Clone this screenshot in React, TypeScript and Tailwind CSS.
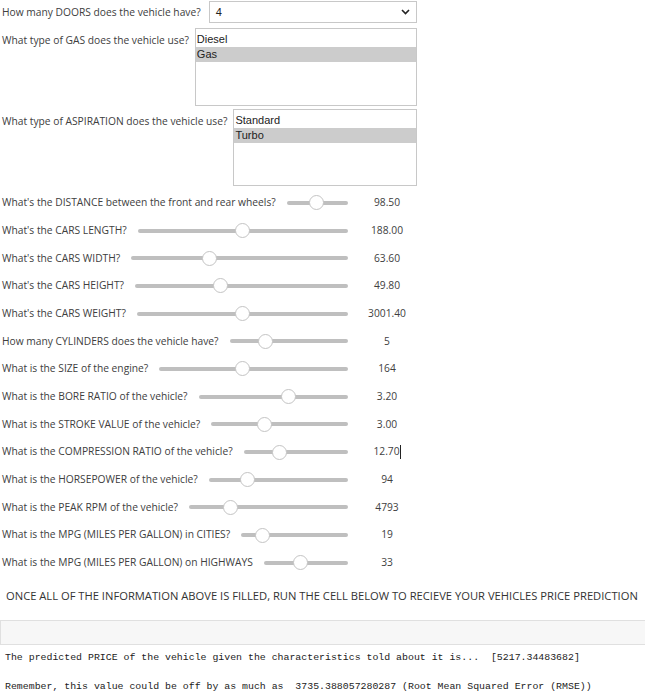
import React from "react";

const sliders: { label: string; value: string; p: number; cursor?: boolean }[] = [
  { label: "What's the DISTANCE between the front and rear wheels?", value: "98.50", p: 0.48 },
  { label: "What's the CARS LENGTH?", value: "188.00", p: 0.5 },
  { label: "What's the CARS WIDTH?", value: "63.60", p: 0.36 },
  { label: "What's the CARS HEIGHT?", value: "49.80", p: 0.4 },
  { label: "What's the CARS WEIGHT?", value: "3001.40", p: 0.5 },
  { label: "How many CYLINDERS does the vehicle have?", value: "5", p: 0.3 },
  { label: "What is the SIZE of the engine?", value: "164", p: 0.44 },
  { label: "What is the BORE RATIO of the vehicle?", value: "3.20", p: 0.6 },
  { label: "What is the STROKE VALUE of the vehicle?", value: "3.00", p: 0.39 },
  { label: "What is the COMPRESSION RATIO of the vehicle?", value: "12.70", p: 0.34, cursor: true },
  { label: "What is the HORSEPOWER of the vehicle?", value: "94", p: 0.28 },
  { label: "What is the PEAK RPM of the vehicle?", value: "4793", p: 0.26 },
  { label: "What is the MPG (MILES PER GALLON) in CITIES?", value: "19", p: 0.2 },
  { label: "What is the MPG (MILES PER GALLON) on HIGHWAYS", value: "33", p: 0.44 },
];

function Slider({ label, value, p, cursor }: { label: string; value: string; p: number; cursor?: boolean }) {
  return (
    <div className="flex items-center h-[27.69px] w-[426px]">
      <span className="pl-[2px] whitespace-nowrap">{label}</span>
      <div className="relative ml-[11px] flex-1 h-[4px] rounded-full bg-[#bfbfbf]">
        <div
          className="absolute top-[-5.5px] w-[15px] h-[15px] rounded-full bg-white border border-[#c4c4c4]"
          style={{ left: `calc(${p * 100}% - 7.5px)` }}
        />
      </div>
      <div className="w-[78px] flex justify-center items-center">
        <span>{value}</span>
        {cursor && <span className="inline-block w-[1px] h-[14px] bg-[#222]" />}
      </div>
    </div>
  );
}

export default function App() {
  return (
    <div className="w-[645px] h-[693px] bg-white overflow-hidden font-['Open_Sans',sans-serif] text-[10.25px] text-[#404040] relative">
      {/* doors dropdown */}
      <div className="flex items-start h-[24px] pt-[1px] w-[417px]">
        <span className="pl-[2px] leading-[22px] whitespace-nowrap">How many DOORS does the vehicle have?</span>
        <div className="ml-[8px] flex-1 h-[22px] border border-[#c8c8c8] flex items-center justify-between pl-[6px] pr-[6px] font-['Liberation_Sans',sans-serif] text-[11px] text-[#222]">
          <span>4</span>
          <svg width="9" height="6" viewBox="0 0 9 6">
            <polyline points="1,1 4.5,4.5 8,1" fill="none" stroke="#222" strokeWidth="1.6" />
          </svg>
        </div>
      </div>
      {/* gas select */}
      <div className="flex items-start mt-[4px] h-[78px] w-[417px]">
        <span className="pl-[2px] mt-[5px] whitespace-nowrap">What type of GAS does the vehicle use?</span>
        <div className="ml-[6px] flex-1 h-[78px] border border-[#c8c8c8] pt-[3px] font-['Liberation_Sans',sans-serif] text-[11px] text-[#222] leading-[15px]">
          <div className="pl-[1px]">Diesel</div>
          <div className="pl-[1px] bg-[#cccccc]">Gas</div>
        </div>
      </div>
      {/* aspiration select */}
      <div className="flex items-start mt-[3px] h-[78px] w-[417px]">
        <span className="pl-[2px] mt-[5px] whitespace-nowrap">What type of ASPIRATION does the vehicle use?</span>
        <div className="ml-[6px] flex-1 h-[77px] border border-[#c8c8c8] pt-[3px] font-['Liberation_Sans',sans-serif] text-[11px] text-[#222] leading-[15px]">
          <div className="pl-[1px]">Standard</div>
          <div className="pl-[1px] bg-[#cccccc]">Turbo</div>
        </div>
      </div>
      {/* sliders */}
      <div className="flex flex-col mt-[2px]">
        {sliders.map((s) => (
          <Slider key={s.label} {...s} />
        ))}
      </div>
      <div className="mt-[10px] pl-[6px] text-[11.2px] leading-[17px] text-[#333] whitespace-nowrap">
        ONCE ALL OF THE INFORMATION ABOVE IS FILLED, RUN THE CELL BELOW TO RECIEVE YOUR VEHICLES PRICE PREDICTION
      </div>
      <div className="mt-[16px] h-[25px] bg-[#f7f7f7] border-y border-l border-[#e0e0e0]" />
      <div className="font-['Liberation_Mono',monospace] text-[9.9px] text-[#222] whitespace-pre pl-[5px]">
        <div className="mt-[6px] leading-[14px]">The predicted PRICE of the vehicle given the characteristics told about it is...  [5217.34483682]</div>
        <div className="mt-[15px] leading-[14px]">Remember, this value could be off by as much as  3735.388057280287 (Root Mean Squared Error (RMSE))</div>
      </div>
    </div>
  );
}
